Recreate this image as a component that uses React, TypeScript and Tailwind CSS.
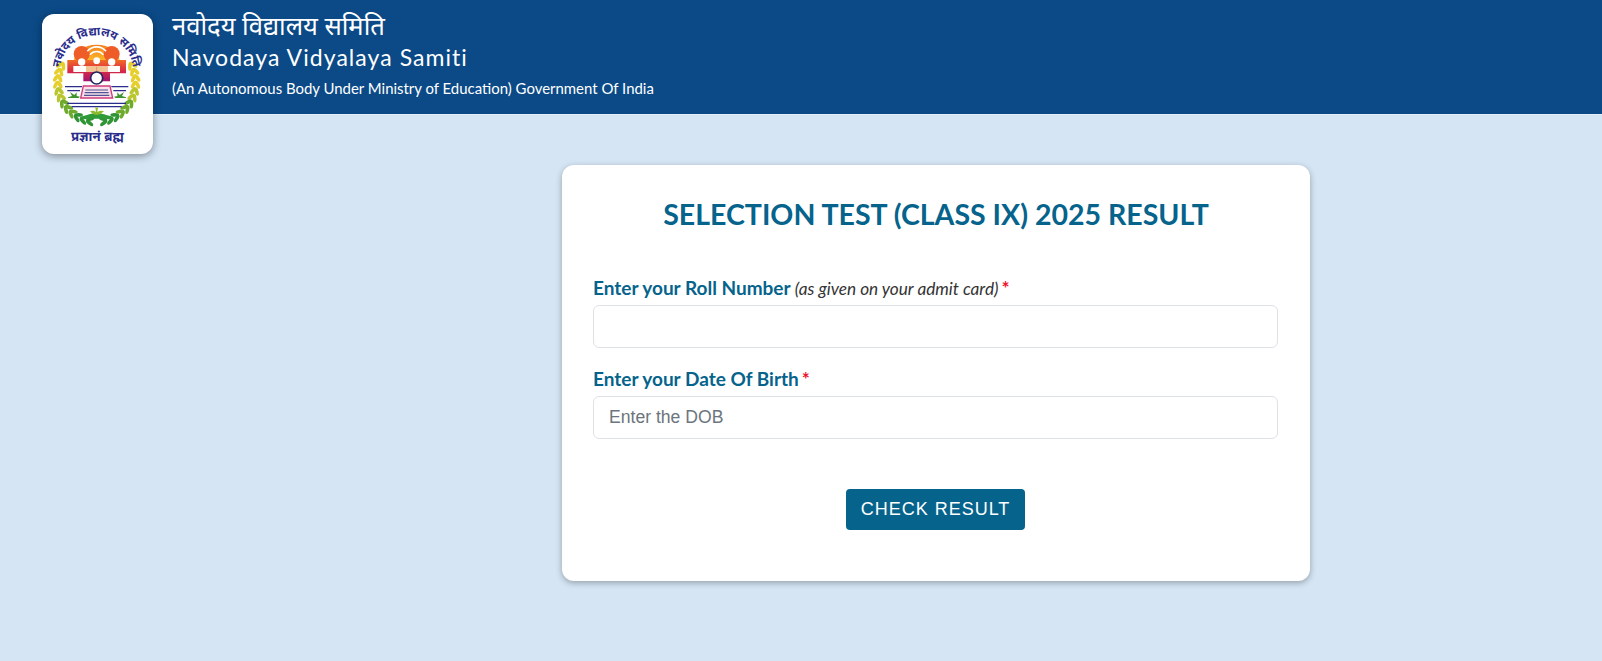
import React from "react";

const BLUE = "#2a2d8c";

function Logo() {
  const leaves = (side: number) => {
    const out: React.ReactNode[] = [];
    for (let i = 0; i < 12; i++) {
      const t = i / 11;
      const deg = -26 + t * 106;
      const a = (deg * Math.PI) / 180;
      const r = 117;
      const x = 200 + side * r * Math.cos(a);
      const y = 254 + r * Math.sin(a);
      const color =
        i < 4 ? "#e6cf2c" : i < 6 ? "#b9c62d" : i < 9 ? "#6eaa2c" : "#2f9433";
      const rot = side * deg;
      [-1, 1].forEach((k) => {
        const cx = x + side * k * 6 * Math.cos(a);
        const cy = y + k * 6 * Math.sin(a);
        out.push(
          <ellipse
            key={`${i}${k}`}
            cx={cx}
            cy={cy}
            rx="5.5"
            ry="13"
            fill={color}
            transform={`rotate(${rot - side * k * 28} ${cx} ${cy})`}
          />
        );
      });
    }
    return out;
  };
  return (
    <svg viewBox="69 75 267 366" className="w-[89px] h-[122px] overflow-visible">
      <defs>
        <path id="nvs-arc" d="M90 222 A110 110 0 0 1 310 222" />
        <linearGradient id="nvs-bar" x1="0" x2="0" y1="0" y2="1">
          <stop offset="0" stopColor="#f26a26" />
          <stop offset="0.5" stopColor="#d92b45" />
          <stop offset="1" stopColor="#a3156f" />
        </linearGradient>
        <linearGradient id="nvs-sun" x1="0" x2="0" y1="0" y2="1">
          <stop offset="0" stopColor="#f4801f" />
          <stop offset="1" stopColor="#fbc02a" />
        </linearGradient>
      </defs>
      {leaves(-1)}
      {leaves(1)}
      <text fontSize="35" fontWeight="700" fill={BLUE} fontFamily="'Noto Sans Devanagari','Noto Sans',sans-serif">
        <textPath href="#nvs-arc" startOffset="50%" textAnchor="middle">नवोदय विद्यालय समिति</textPath>
      </text>
      <path d="M130 195 A70 55 0 0 1 270 195 Z" fill="url(#nvs-sun)" />
      <circle cx="155" cy="168" r="24" fill="#ee5c27" />
      <circle cx="245" cy="168" r="24" fill="#ee5c27" />
      <path d="M172 160 A36 36 0 0 1 228 160 M180 170 A26 26 0 0 1 220 170" fill="none" stroke="#fff" strokeWidth="5" />
      <path d="M112 186 H288 V226 H240 V250 H160 V226 H112 Z" fill="url(#nvs-bar)" />
      <rect x="130" y="204" width="38" height="18" fill="#fff" />
      <rect x="232" y="204" width="38" height="18" fill="#fff" />
      <circle cx="155" cy="192" r="11" fill="#fff" />
      <circle cx="245" cy="192" r="11" fill="#fff" />
      <circle cx="200" cy="188" r="10" fill="#fff" />
      <rect x="168" y="204" width="64" height="18" fill="#f3c293" />
      <path d="M200 206 V222" stroke="#c98a58" strokeWidth="2" />
      <circle cx="200" cy="240" r="18" fill="#fff" stroke="#23265f" strokeWidth="5" />
      <path d="M105 266 H156 M244 266 H295 M112 278 H150 M250 278 H288 M112 316 H288 M125 326 H275" stroke={BLUE} strokeWidth="3.5" />
      <path d="M160 264 H240 L248 300 H152 Z" fill="#f9dfe8" stroke="#cf3b7d" strokeWidth="4" />
      <path d="M166 276 H234 M164 284 H236 M162 292 H238" stroke="#4f5596" strokeWidth="3.5" />
      <path d="M114 298 L126 294 L120 282 L133 291 L140 283 L140 294 L150 296 L146 300 H114 Z" fill="#3f9431" />
      <path d="M288 298 L276 294 L282 282 L269 291 L262 283 L262 294 L252 296 L256 300 H288 Z" fill="#3f9431" />
      <path d="M150 362 Q200 330 250 362 Z" fill="#2f9a38" />
      <path d="M180 340 Q190 336 198 342 L196 326 Q200 332 204 326 L202 342 Q212 336 222 340 Q210 352 200 350 Q190 352 180 340 Z" fill="#8dbb2b" />
      <text x="202" y="430" fontSize="40" fontWeight="700" fill={BLUE} textAnchor="middle" fontFamily="'Noto Sans Devanagari','Noto Sans',sans-serif">प्रज्ञानं ब्रह्म</text>
    </svg>
  );
}

export default function App() {
  return (
    <div className="min-h-[661px] bg-[#d5e5f4] font-['Lato','Noto_Sans_Devanagari','Noto_Sans',sans-serif]">
      <header className="h-[115px] bg-[#0b4a87] flex items-start pl-[42px] border-b border-[#e4eef8]">
        <div className="relative z-10 mt-[14px] w-[111px] h-[140px] shrink-0 bg-white rounded-[12px] shadow-[0_2px_8px_rgba(0,0,0,0.4)] flex items-center justify-center">
          <Logo />
        </div>
        <div className="ml-[19px] text-white">
          <div className="text-[25.6px] leading-[28px] mt-[11px]">नवोदय विद्यालय समिति</div>
          <div className="text-[23px] leading-[28px] tracking-[1.05px] mt-[4px]">Navodaya Vidyalaya Samiti</div>
          <div className="text-[14.94px] leading-[20px] mt-[7px]">(An Autonomous Body Under Ministry of Education) Government Of India</div>
        </div>
      </header>
      <main className="pl-[562px] pt-[50px]">
        <section className="w-[748px] h-[416px] bg-white rounded-[12px] shadow-[0_2px_6px_rgba(0,0,0,0.3)] px-[31px] pt-[29px]">
          <h1 className="text-center text-[28.5px] leading-[40px] font-bold text-[#05638c]">SELECTION TEST (CLASS IX) 2025 RESULT</h1>
          <label className="block mt-[41px] text-[19px] leading-[26px] font-bold text-[#05638c]">
            Enter your Roll Number{" "}
            <span className="text-[17.2px] font-normal italic text-[#333333]">(as given on your admit card)</span>
            <span className="ml-[3px] text-[#f0122d]">*</span>
          </label>
          <input type="text" className="block w-[685px] h-[43px] mt-[3px] rounded-[6px] border border-[#dee2e6] bg-white" />
          <label className="block mt-[18px] text-[19px] leading-[26px] font-bold text-[#05638c]">
            Enter your Date Of Birth<span className="ml-[3px] text-[#f0122d]">*</span>
          </label>
          <input
            type="text"
            placeholder="Enter the DOB"
            className="block w-[685px] h-[43px] mt-[4px] px-[15px] rounded-[6px] border border-[#dee2e6] bg-white text-[17.6px] font-['Liberation_Sans',sans-serif] placeholder:text-[#6c757d]"
          />
          <div className="w-[685px] flex justify-center mt-[50px]">
            <button className="w-[179px] h-[41px] rounded-[4px] bg-[#05638c] text-white text-[18px] tracking-[1px] font-['Liberation_Sans',sans-serif]">CHECK RESULT</button>
          </div>
        </section>
      </main>
    </div>
  );
}
